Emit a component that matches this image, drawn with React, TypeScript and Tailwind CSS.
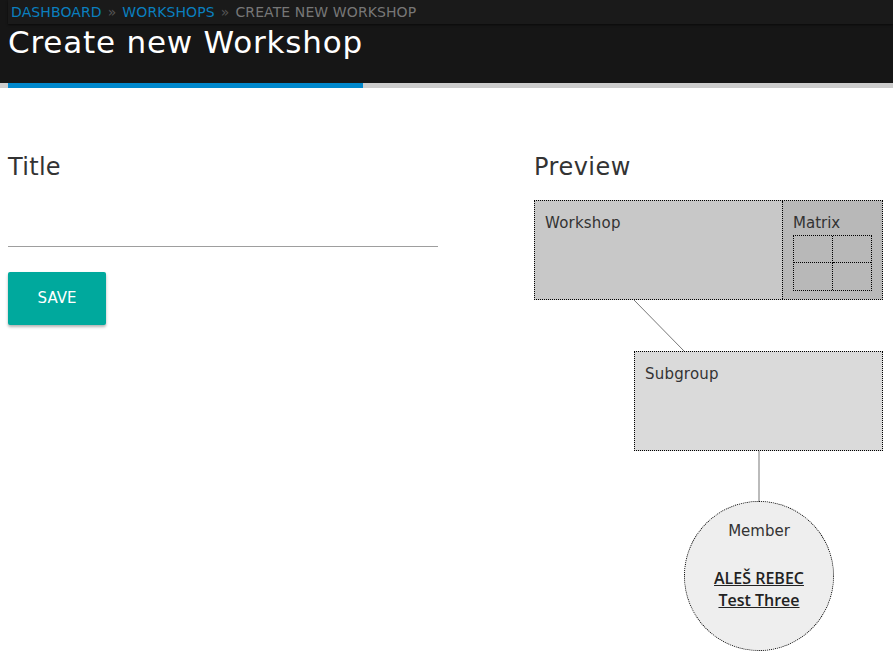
import React from "react";

const F = { fontFamily: '"DejaVu Sans", "Open Sans", sans-serif' };
const OS = { fontFamily: '"Open Sans", "DejaVu Sans", sans-serif' };

export default function App() {
  return (
    <div className="min-h-[660px] bg-white text-[#333]" style={F}>
      <header className="bg-[#161616]">
        <div className="h-[83px] flex flex-col">
          <div className="ml-2 h-[24px] bg-[#1a1a1a] shadow-[0_1px_2px_rgba(0,0,0,0.6)] flex items-center pl-[3px] text-[14px] leading-none tracking-[0.1px]">
            <span className="text-[#0a7fbf]">DASHBOARD</span>
            <span className="text-[#555] mx-[6px]">»</span>
            <span className="text-[#0a7fbf]">WORKSHOPS</span>
            <span className="text-[#555] mx-[6px]">»</span>
            <span className="text-[#777]">CREATE NEW WORKSHOP</span>
          </div>
          <h1 className="ml-[8px] mt-[0px] text-[31px] leading-[36px] tracking-[0.8px] text-white">Create new Workshop</h1>
        </div>
        <div className="h-[5px] bg-[#cccccc] pl-2">
          <div className="h-full w-[355px] bg-[#0088cc]" />
        </div>
      </header>

      <main className="flex px-2 pt-[64px]">
        <div className="w-[430px]">
          <div className="text-[24px] leading-[30px] h-[30px] tracking-[0.3px]">Title</div>
          <div className="mt-[64px] border-b border-[#9e9e9e] h-0" />
          <button className="mt-[25px] w-[98px] h-[53px] rounded-[2px] bg-[#00a99d] text-white text-[15px] shadow-[0_2px_3px_rgba(0,0,0,0.3)]">
            SAVE
          </button>
        </div>

        <div className="ml-[96px] w-[349px]">
          <div className="text-[24px] leading-[30px] h-[30px] tracking-[0.5px]">Preview</div>
          <div className="mt-[18px] h-[100px] flex border border-dotted border-black bg-[#c8c8c8]">
            <div className="flex-1 pl-[10px] pt-[12px] text-[15px] leading-[20px] tracking-[0.2px]">Workshop</div>
            <div className="w-[100px] border-l border-dotted border-black bg-[#b8b8b8] pl-[10px] pt-[12px]">
              <div className="text-[15px] leading-[20px]">Matrix</div>
              <div className="mt-[2px] grid grid-cols-2 w-[79px] border border-dotted border-black">
                <div className="h-[27px] border-r border-b border-dotted border-black" />
                <div className="h-[27px] border-b border-dotted border-black" />
                <div className="h-[27px] border-r border-dotted border-black" />
                <div className="h-[27px]" />
              </div>
            </div>
          </div>
          <svg width="349" height="51" className="block">
            <line x1="100" y1="0" x2="150" y2="51" stroke="#777" strokeWidth="1" />
          </svg>
          <div className="ml-[100px] h-[100px] border border-dotted border-black bg-[#dadada] pl-[10px] pt-[12px] text-[15px] leading-[20px] tracking-[0.2px]">
            Subgroup
          </div>
          <div className="ml-[224px] w-[2px] h-[50px] bg-[#bbbbbb]" />
          <div className="ml-[150px] w-[150px] h-[150px] rounded-full border border-dotted border-black bg-[#eeeeee] flex flex-col items-center">
            <div className="mt-[19px] text-[15px] leading-[20px]">Member</div>
            <a className="mt-[26px] text-[16px] leading-[22px] font-semibold text-[#222] underline" style={OS}>ALEŠ REBEC</a>
            <a className="text-[16px] leading-[22px] font-semibold text-[#222] underline" style={OS}>Test Three</a>
          </div>
        </div>
      </main>
    </div>
  );
}
